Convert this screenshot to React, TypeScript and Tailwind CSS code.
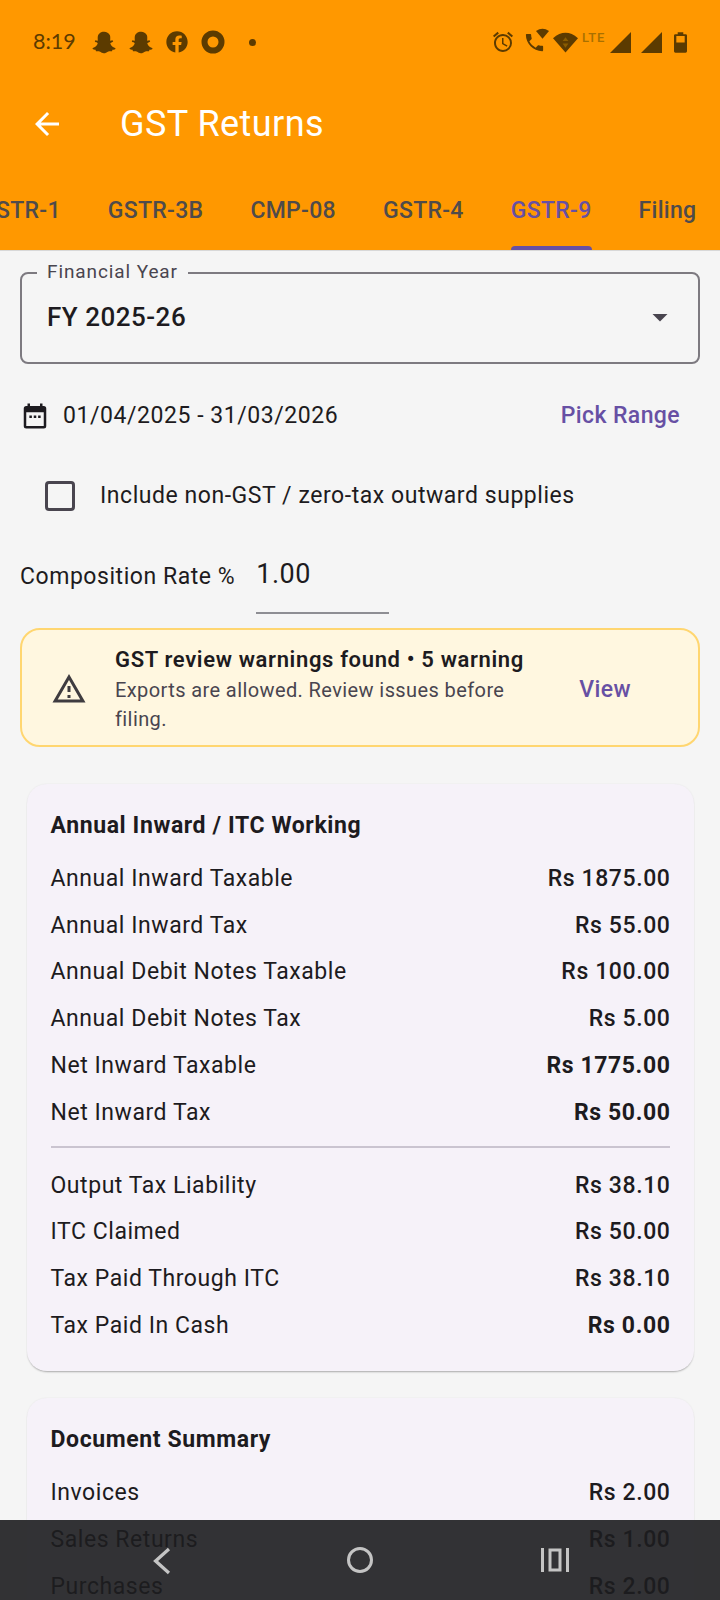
import { FaFacebook, FaSnapchatGhost } from 'react-icons/fa';
import { MdAccessAlarm, MdArrowBack, MdArrowDropDown, MdOutlineWarningAmber, MdPhone } from 'react-icons/md';

const tabs = ['GSTR-1', 'GSTR-3B', 'CMP-08', 'GSTR-4', 'GSTR-9', 'Filing'];

type Row = [string, string, boolean?];

const inwardRows: Row[] = [
  ['Annual Inward Taxable', 'Rs 1875.00'],
  ['Annual Inward Tax', 'Rs 55.00'],
  ['Annual Debit Notes Taxable', 'Rs 100.00'],
  ['Annual Debit Notes Tax', 'Rs 5.00'],
  ['Net Inward Taxable', 'Rs 1775.00', true],
  ['Net Inward Tax', 'Rs 50.00', true],
];

const taxRows: Row[] = [
  ['Output Tax Liability', 'Rs 38.10'],
  ['ITC Claimed', 'Rs 50.00'],
  ['Tax Paid Through ITC', 'Rs 38.10'],
  ['Tax Paid In Cash', 'Rs 0.00', true],
];

const docRows: Row[] = [
  ['Invoices', 'Rs 2.00'],
  ['Sales Returns', 'Rs 1.00'],
  ['Purchases', 'Rs 2.00'],
];

function StatusBar() {
  return (
    <div className="flex h-[82px] items-center justify-between pl-[33px] pr-[33px] pt-[2px] text-[#5c3b00]">
      <div className="flex items-center">
        <span className="w-[59px] font-['Lato',sans-serif] text-[21.5px] leading-none">8:19</span>
        <FaSnapchatGhost className="h-[23px] w-[24px]" />
        <FaSnapchatGhost className="ml-[13px] h-[23px] w-[24px]" />
        <FaFacebook className="ml-[13px] h-[22px] w-[22px]" />
        <svg className="ml-[13px]" width="24" height="24" viewBox="0 0 24 24">
          <circle cx="12" cy="12" r="8.5" fill="none" stroke="currentColor" strokeWidth="6" />
        </svg>
        <span className="ml-[24px] h-[7px] w-[7px] rounded-full bg-current" />
      </div>
      <div className="flex items-center">
        <MdAccessAlarm className="h-[24px] w-[24px]" />
        <div className="relative ml-[10px] h-[24px] w-[24px]">
          <MdPhone className="absolute bottom-0 left-[-2px] h-[23px] w-[23px]" />
          <svg className="absolute right-0 top-[-2px]" width="13" height="11" viewBox="0 0 15 12">
            <path d="M0 3 Q7.5 -2 15 3 L7.5 12 Z" fill="currentColor" />
          </svg>
        </div>
        <svg className="ml-[4px]" width="25" height="22" viewBox="0 0 26 22">
          <path d="M0 7 Q13 -4 26 7 L13 22 Z" fill="currentColor" />
          <path d="M13 6 L16 10 H10 Z M13 17 L10 12.5 H16 Z" fill="#8a5c00" />
        </svg>
        <span className="mb-[10px] ml-[4px] w-[26px] text-[13px] font-medium leading-none tracking-[0.8px] text-[#a87000]">LTE</span>
        <svg className="ml-[2px]" width="21" height="21" viewBox="0 0 21 21">
          <path d="M21 0 V21 H0 Z" fill="currentColor" />
        </svg>
        <svg className="ml-[10px]" width="21" height="21" viewBox="0 0 21 21">
          <path d="M21 0 V21 H0 Z" fill="currentColor" />
        </svg>
        <svg className="ml-[12px]" width="13" height="21" viewBox="0 0 14 22">
          <path d="M4 0 H10 V2 H12.5 Q14 2 14 3.5 V20.5 Q14 22 12.5 22 H1.5 Q0 22 0 20.5 V3.5 Q0 2 1.5 2 H4 Z" fill="currentColor" />
          <rect x="2.5" y="4" width="9" height="7" fill="#ff9800" />
        </svg>
      </div>
    </div>
  );
}

function SummaryRow({ row }: { row: Row }) {
  const [label, value, bold] = row;
  return (
    <div className="flex h-[46.7px] items-center justify-between text-[23px] tracking-[0.55px] text-[#1d1b20]">
      <span>{label}</span>
      <span className={bold ? 'mr-[-1px] font-bold tracking-[0.6px]' : 'mr-[-1px] font-medium tracking-[0.6px]'}>{value}</span>
    </div>
  );
}

function Card({ title, children }: { title: string; children: React.ReactNode }) {
  return (
    <div className="rounded-[20px] bg-[#f6f2f9] px-[24px] pb-[22px] pt-[24px] shadow-[0_2px_2px_-1px_rgba(0,0,0,0.3),0_0_2px_rgba(0,0,0,0.07)]">
      <div className="mb-[12px] text-[23px] font-bold leading-[36px] tracking-[0.6px] text-[#1d1b20]">{title}</div>
      {children}
    </div>
  );
}

export default function App() {
  return (
    <div className="relative h-[1600px] w-[720px] overflow-hidden bg-[#f5f5f5] font-['Roboto',sans-serif]">
      {/* Header */}
      <header className="h-[251px] overflow-hidden border-b border-[#d8d8d8] bg-[#ff9800]">
        <StatusBar />
        <div className="flex h-[82px] items-center pl-[29px] pt-[2px]">
          <MdArrowBack className="h-[36px] w-[36px] text-white" />
          <h1 className="ml-[55px] text-[36px] leading-none tracking-[0.45px] text-white">GST Returns</h1>
        </div>
        <nav className="ml-[-20px] flex h-[86px] items-start gap-[47px] whitespace-nowrap pt-[32px] text-[23px] font-medium leading-[30px] tracking-[0.3px] text-[#4f4b4b]">
          {tabs.map((tab) => (
            <div key={tab} className={tab === 'GSTR-9' ? 'relative text-[#6750a4]' : ''}>
              {tab}
              {tab === 'GSTR-9' && (
                <span className="absolute bottom-[-24px] left-0 right-0 h-[4px] rounded-t-[4px] bg-[#6750a4]" />
              )}
            </div>
          ))}
        </nav>
      </header>

      <main className="px-[20px]">
        {/* Financial year */}
        <div className="relative mt-[21px] flex h-[92px] items-center justify-between rounded-[8px] border-[2px] border-[#7d7a80] pb-[2px] pl-[25px] pr-[20px]">
          <span className="absolute left-[15px] top-[-13px] bg-[#f5f5f5] px-[10px] text-[19px] leading-[22px] tracking-[0.9px] text-[#49454f]">Financial Year</span>
          <span className="text-[26px] font-medium tracking-[0.5px] text-[#1d1b20]">FY 2025-26</span>
          <MdArrowDropDown className="h-[36px] w-[36px] text-[#49454f]" />
        </div>

        {/* Date range */}
        <div className="mt-[35px] flex items-center justify-between pr-[20px]">
          <div className="flex items-center">
            <svg className="h-[30px] w-[30px] text-[#1d1b20]" viewBox="0 0 24 24" fill="currentColor">
              <path fillRule="evenodd" d="M19 4h-1V2h-2v2H8V2H6v2H5a2 2 0 0 0-2 2v14a2 2 0 0 0 2 2h14a2 2 0 0 0 2-2V6a2 2 0 0 0-2-2zM19 20H5V9h14z" />
              <path d="M7.5 11.5h2v2h-2zM11 11.5h2v2h-2zM14.5 11.5h2v2h-2z" />
            </svg>
            <span className="ml-[13px] text-[23px] tracking-[0.55px] text-[#1d1b20]">01/04/2025 - 31/03/2026</span>
          </div>
          <span className="text-[23px] font-medium tracking-[0.4px] text-[#6750a4]">Pick Range</span>
        </div>

        {/* Non-GST checkbox */}
        <div className="mt-[45px] flex items-center pl-[25px]">
          <span className="h-[30px] w-[30px] rounded-[4px] border-[3px] border-[#49454f]" />
          <span className="ml-[25px] text-[23px] tracking-[0.55px] text-[#1d1b20]">Include non-GST / zero-tax outward supplies</span>
        </div>

        {/* Composition rate */}
        <div className="mt-[43px] flex items-start">
          <span className="mt-[4px] text-[23px] tracking-[0.55px] text-[#1d1b20]">Composition Rate %</span>
          <div className="ml-[21px] flex h-[58px] w-[133px] items-start border-b-[2px] border-[#8e8e93] pt-[1px] text-[27px] leading-[34px] tracking-[0.5px] text-[#1d1b20]">1.00</div>
        </div>

        {/* Warning banner */}
        <div className="mt-[14px] flex h-[119px] items-center rounded-[20px] border-[2px] border-[#ffd670] bg-[#fff7e0] pl-[29px] pr-[67px]">
          <MdOutlineWarningAmber className="mt-[2px] h-[36px] w-[36px] shrink-0 text-[#3f3c40]" />
          <div className="ml-[28px] w-[420px] pt-[2px]">
            <div className="text-[22px] font-semibold leading-[32px] tracking-[0.65px] text-[#1d1b20]">GST review warnings found • 5 warning</div>
            <div className="text-[20px] leading-[29px] tracking-[0.4px] text-[#49454f]">Exports are allowed. Review issues before filing.</div>
          </div>
          <span className="ml-auto mt-[5px] text-[23px] font-medium tracking-[0.4px] text-[#6750a4]">View</span>
        </div>

        <div className="mt-[37px] flex flex-col gap-[27px] px-[6.5px]">
          <Card title="Annual Inward / ITC Working">
            {inwardRows.map((row) => (
              <SummaryRow key={row[0]} row={row} />
            ))}
            <div className="mb-[15px] mt-[10px] h-[1.5px] bg-[#cac4d0]" />
            {taxRows.map((row) => (
              <SummaryRow key={row[0]} row={row} />
            ))}
          </Card>
          <Card title="Document Summary">
            {docRows.map((row) => (
              <SummaryRow key={row[0]} row={row} />
            ))}
          </Card>
        </div>
      </main>

      {/* Android nav bar */}
      <div className="absolute bottom-0 left-0 right-0 flex h-[80px] items-start bg-[#1d1d1f]/90 pt-[28px]">
        <svg className="absolute left-[150px] top-[26px]" width="28" height="30" viewBox="0 0 28 30" fill="none" stroke="#c4c4c4" strokeWidth="3.5">
          <path d="M21 3 L7 15 L21 27" transform="translate(-1 0) scale(0.95 1)" />
        </svg>
        <svg className="absolute left-[346px] top-[26px]" width="28" height="28" viewBox="0 0 28 28" fill="none" stroke="#c4c4c4" strokeWidth="3">
          <circle cx="14" cy="14" r="11.5" />
        </svg>
        <svg className="absolute left-[540px] top-[27px]" width="30" height="26" viewBox="0 0 30 26" fill="none" stroke="#c4c4c4" strokeWidth="3">
          <path d="M2.5 1 V25 M27.5 1 V25" />
          <rect x="10" y="3" width="10" height="20" />
        </svg>
      </div>
    </div>
  );
}
